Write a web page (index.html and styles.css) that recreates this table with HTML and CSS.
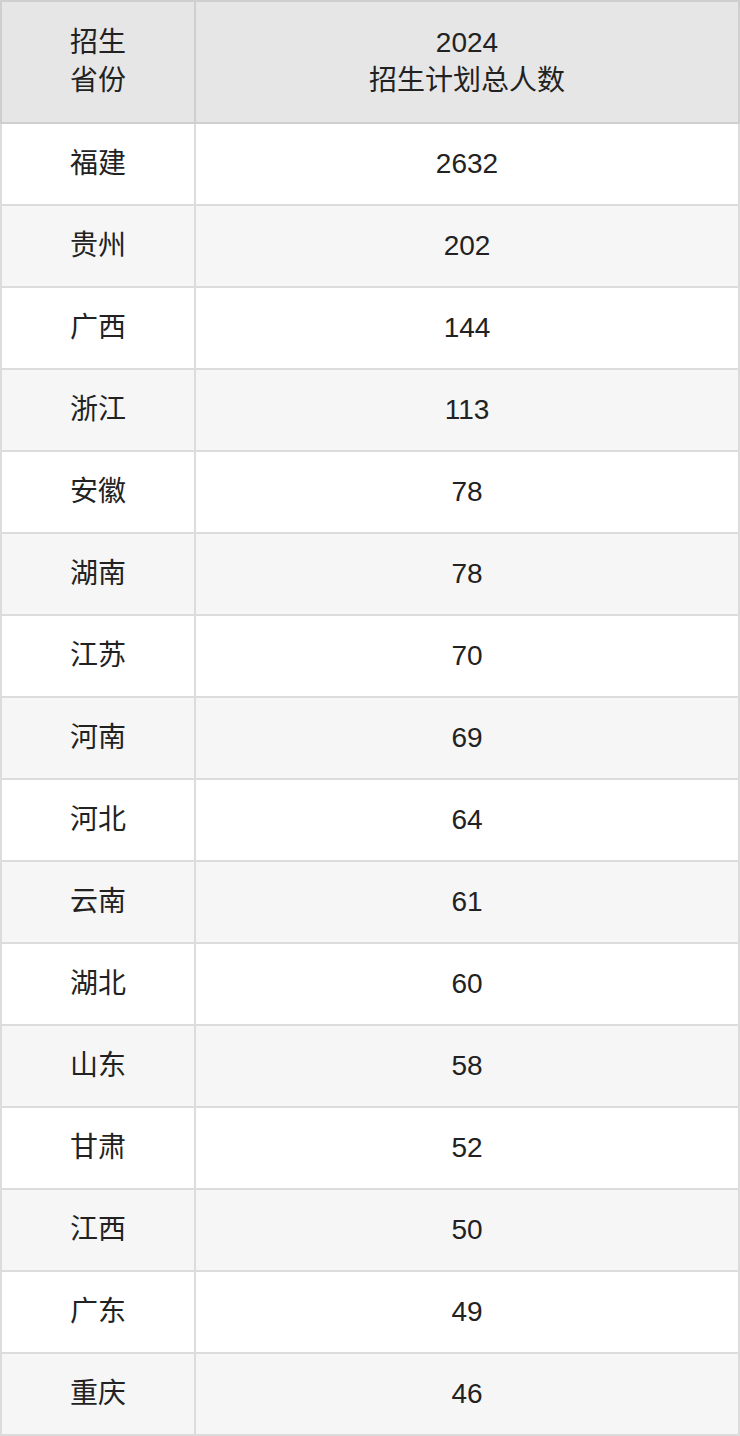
FILE: index.html
```html
<!DOCTYPE html>
<html lang="zh">
<head>
<meta charset="utf-8">
<link rel="stylesheet" href="styles.css">
</head>
<body>
<table class="plan">
  <thead>
    <tr><th class="c1">招生<br>省份</th><th class="c2">2024<br>招生计划总人数</th></tr>
  </thead>
  <tbody>
    <tr><td>福建</td><td>2632</td></tr>
    <tr><td>贵州</td><td>202</td></tr>
    <tr><td>广西</td><td>144</td></tr>
    <tr><td>浙江</td><td>113</td></tr>
    <tr><td>安徽</td><td>78</td></tr>
    <tr><td>湖南</td><td>78</td></tr>
    <tr><td>江苏</td><td>70</td></tr>
    <tr><td>河南</td><td>69</td></tr>
    <tr><td>河北</td><td>64</td></tr>
    <tr><td>云南</td><td>61</td></tr>
    <tr><td>湖北</td><td>60</td></tr>
    <tr><td>山东</td><td>58</td></tr>
    <tr><td>甘肃</td><td>52</td></tr>
    <tr><td>江西</td><td>50</td></tr>
    <tr><td>广东</td><td>49</td></tr>
    <tr><td>重庆</td><td>46</td></tr>
  </tbody>
</table>
</body>
</html>
```
FILE: styles.css
```css
html, body { margin: 0; padding: 0; background: #fff; }
.plan {
  width: 740px;
  border-collapse: collapse;
  table-layout: fixed;
  font-family: "Liberation Sans", "Noto Sans CJK SC", sans-serif;
  font-size: 28px;
  color: #222;
}
.plan th, .plan td {
  border: 2px solid #dcdcdc;
  text-align: center;
  vertical-align: middle;
  padding: 0;
  font-weight: normal;
}
.plan th {
  background: #e6e6e6;
  height: 120px;
  line-height: 38px;
  border-color: #cfcfcf;
}
.plan .c1 { width: 192px; }
.plan td { height: 80px; line-height: 80px; }
.plan tbody tr:nth-child(even) td { background: #f6f6f6; }
```
